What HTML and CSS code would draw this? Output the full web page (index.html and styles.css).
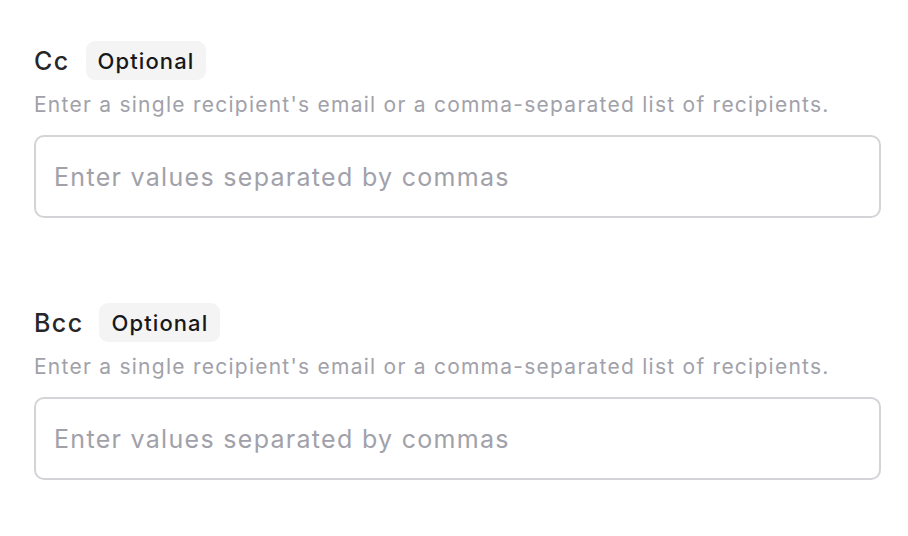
FILE: index.html
```html
<!DOCTYPE html>
<html>
<head>
<meta charset="utf-8">
<link rel="stylesheet" href="styles.css">
</head>
<body>
<div class="form">
  <div class="field">
    <div class="label-row">
      <span class="label">Cc</span>
      <span class="badge">Optional</span>
    </div>
    <div class="help">Enter a single recipient's email or a comma-separated list of recipients.</div>
    <input class="input" type="text" placeholder="Enter values separated by commas">
  </div>
  <div class="field">
    <div class="label-row">
      <span class="label">Bcc</span>
      <span class="badge">Optional</span>
    </div>
    <div class="help">Enter a single recipient's email or a comma-separated list of recipients.</div>
    <input class="input" type="text" placeholder="Enter values separated by commas">
  </div>
</div>
</body>
</html>
```
FILE: styles.css
```css
html, body {
  margin: 0;
  padding: 0;
  background: #ffffff;
}
body {
  font-family: Inter, "Noto Sans", sans-serif;
}
.form {
  padding: 41px 27px 0 34px;
  display: flex;
  flex-direction: column;
  gap: 85px;
}
.field {
  display: flex;
  flex-direction: column;
}
.label-row {
  display: flex;
  align-items: center;
  gap: 16px;
  height: 39px;
}
.label {
  font-size: 25px;
  letter-spacing: 1.4px;
  color: #27272a;
  font-weight: 500;
}
.badge {
  background: #f4f4f5;
  color: #18181b;
  font-size: 22px;
  letter-spacing: 1.1px;
  font-weight: 500;
  border-radius: 9px;
  height: 39px;
  display: flex;
  align-items: center;
  padding: 0 12px 0 12px;
}
.help {
  margin-top: 11px;
  font-size: 21px;
  letter-spacing: 1.25px;
  line-height: 28px;
  color: #a1a1aa;
}
.input {
  margin-top: 16px;
  box-sizing: border-box;
  width: 847px;
  height: 83px;
  border: 2px solid #d4d4d8;
  border-radius: 10px;
  padding: 0 18px;
  font-family: inherit;
  font-size: 25px;
  letter-spacing: 1.3px;
  color: #27272a;
  outline: none;
  background: #fff;
}
.input::placeholder {
  color: #a1a1aa;
}
```
